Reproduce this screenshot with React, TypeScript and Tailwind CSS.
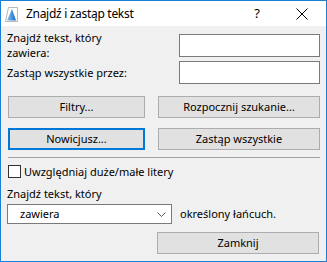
import React from "react";

const font = { fontFamily: '"Noto Sans", "Segoe UI", sans-serif' };

function Btn({ children, focused }: { children: React.ReactNode; focused?: boolean }) {
  return (
    <div
      className={
        "h-[22px] flex items-center justify-center bg-[#e1e1e1] text-[11px] text-black " +
        (focused ? "border-2 border-[#0078d7]" : "border border-[#adadad]")
      }
    >
      {children}
    </div>
  );
}

export default function App() {
  return (
    <div
      className="w-[327px] h-[262px] border border-[#1a7fd6] bg-[#f0f0f0] flex flex-col text-[11px] text-black overflow-hidden"
      style={font}
    >
      {/* title bar */}
      <div className="h-[25px] bg-white flex items-center shrink-0">
        <svg width="13" height="15" viewBox="0 0 13 15" className="ml-[4px] mt-[1px]">
          <defs>
            <linearGradient id="g" x1="0" y1="0" x2="1" y2="0">
              <stop offset="0" stopColor="#8ec5f0" />
              <stop offset="1" stopColor="#1466c8" />
            </linearGradient>
          </defs>
          <path d="M3.5 0.5 H12.5 V14.5 H0.5 Z" fill="#fff" stroke="#b8b8b8" />
          <path d="M7 2 L11 13.5 H2 Z" fill="url(#g)" />
        </svg>
        <span className="ml-[8px] text-[12px] leading-none tracking-[-0.3px]">Znajdź i zastąp tekst</span>
        <span className="ml-auto text-[13px] leading-none mr-[36px]">?</span>
        <svg width="12" height="12" viewBox="0 0 12 12" className="mr-[18px]">
          <path d="M0.5 0.5 L11.5 11.5 M11.5 0.5 L0.5 11.5" stroke="#000" strokeWidth="1" />
        </svg>
      </div>

      <div className="flex flex-col px-[6px]">
        {/* row 1 */}
        <div className="flex mt-[4px]">
          <div className="leading-[15px] w-[120px]">
            Znajdź tekst, który
            <br />
            zawiera:
          </div>
          <div className="ml-auto mt-[4px] w-[141px] h-[23px] border border-[#7a7a7a] bg-white" />
        </div>
        {/* row 2 */}
        <div className="flex items-center mt-[1px]">
          <div className="leading-[15px]">Zastąp wszystkie przez:</div>
          <div className="ml-auto w-[141px] h-[23px] border border-[#7a7a7a] bg-white" />
        </div>

        {/* buttons */}
        <div className="grid grid-cols-[137px_162px] gap-x-[13px] gap-y-[10px] ml-[1px] mt-[12px]">
          <Btn>Filtry...</Btn>
          <Btn>Rozpocznij szukanie...</Btn>
          <Btn focused>Nowicjusz...</Btn>
          <Btn>Zastąp wszystkie</Btn>
        </div>

        <div className="h-px bg-[#a0a0a0] ml-[1px] w-[312px] mt-[7px]" />

        <div className="flex items-center mt-[6px] ml-[1px]">
          <div className="w-[13px] h-[13px] border border-[#333] bg-white" />
          <span className="ml-[3px] leading-[15px]">Uwzględniaj duże/małe litery</span>
        </div>

        <div className="mt-[7px] leading-[15px]">Znajdź tekst, który</div>

        <div className="flex items-center mt-[3px]">
          <div className="w-[165px] h-[20px] border border-[#7a7a7a] bg-white flex items-center">
            <span className="ml-[12px]">zawiera</span>
            <svg width="9" height="5" viewBox="0 0 9 5" className="ml-auto mr-[5px]">
              <path d="M0.5 0.5 L4.5 4.5 L8.5 0.5" fill="none" stroke="#555" strokeWidth="1" />
            </svg>
          </div>
          <span className="ml-[8px]">określony łańcuch.</span>
        </div>

        <div className="flex justify-end mt-[8px] mr-[1px]">
          <div className="w-[162px]">
            <Btn>Zamknij</Btn>
          </div>
        </div>
      </div>
    </div>
  );
}
